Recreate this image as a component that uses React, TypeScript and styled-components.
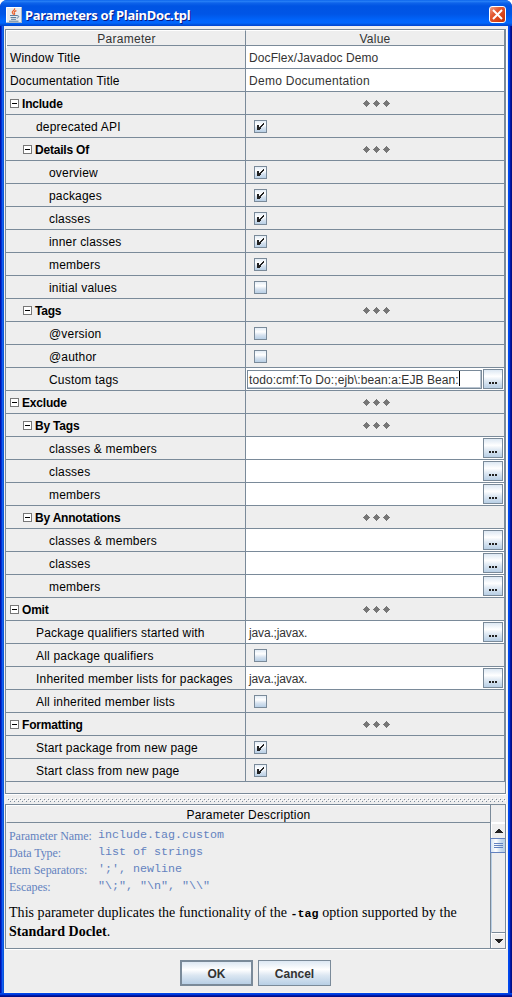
import React from 'react';
import styled, { createGlobalStyle, css } from 'styled-components';

const LINE = '#7a8a99';
const FACE = '#eeeeee';

const GlobalStyle = createGlobalStyle`
  * { box-sizing: border-box; }
  body { margin: 0; background: #fff; }
  svg { display: block; }
`;

const Window = styled.div`
  width: 512px;
  height: 997px;
  padding: 0 4px 4px;
  display: flex;
  flex-direction: column;
  border-radius: 7px 7px 0 0;
  background:
    linear-gradient(180deg, #0046e8 0 1px, #003ada 1px 2px, #0018a8 2px 3px, #000f86 3px) bottom / 100% 4px no-repeat,
    linear-gradient(90deg, #0014a8 0 1px, #0030d8 1px 2px, #1260ee 2px 3px, #0855dd 3px 4px, #0046e8 4px 508px, #0048f0 508px 509px, #0040e0 509px 510px, #0018a8 510px 511px, #000f86 511px);
  font-family: 'Liberation Sans', Arial, sans-serif;
  font-size: 12px;
  color: #000;
  overflow: hidden;
`;

const TitleBar = styled.header`
  height: 26px;
  flex: none;
  margin: 0 -4px;
  padding: 3px 6px 0 6px;
  display: flex;
  align-items: center;
  background: linear-gradient(180deg, #0058e6 0, #2b84f8 1px, #0e63ea 3px, #0054e3 6px, #0055e6 14px, #0064fb 20px, #0066ff 23px, #005be6 24px, #0042cf 26px);
`;

const Title = styled.h1`
  flex: 1;
  margin: 0 0 0 3px;
  font: bold 13px/20px 'Noto Sans', sans-serif;
  letter-spacing: -0.3px;
  white-space: pre;
  color: #fff;
  text-shadow: 1px 1px 0 #0a1883;
`;

const CloseButton = styled.button`
  width: 17px;
  height: 17px;
  padding: 0;
  display: grid;
  place-items: center;
  border: 1px solid #fff;
  border-radius: 3px;
  background: linear-gradient(135deg, #f0a08a, #e35a32 35%, #d63f12 75%, #b93008);
`;

const Client = styled.main`
  flex: 1;
  min-height: 0;
  padding: 3px 2px 0 1px;
  display: flex;
  flex-direction: column;
  background: ${FACE};
  border-bottom: 1px solid #f8f4e8;
`;

const TablePane = styled.section`
  height: 765px;
  flex: none;
  border: 1px solid ${LINE};
  box-shadow: 0 1px 0 #fff, 1px 0 0 #fff;
`;

const Table = styled.div`
  border-right: 1px solid ${LINE};
`;

const HeaderRow = styled.div`
  display: grid;
  grid-template-columns: 240px 1fr;
  height: 16px;
  border-bottom: 1px solid ${LINE};
`;

const HeaderCell = styled.div`
  border-top: 1px solid #fff;
  border-left: 1px solid #fff;
  text-align: center;
  line-height: 17px;
  color: #333;
  letter-spacing: 0.25px;
  & + & { border-left-color: ${LINE}; margin-left: -1px; }
`;

const Row = styled.div`
  display: grid;
  grid-template-columns: 240px 1fr;
  height: 23px;
  border-bottom: 1px solid ${LINE};
`;

const NameCell = styled.div<{ $indent: number; $bold?: boolean }>`
  display: flex;
  align-items: center;
  padding-left: ${p => p.$indent}px;
  border-right: 1px solid ${LINE};
  white-space: pre;
  line-height: 22px;
  letter-spacing: ${p => (p.$bold ? '-0.2px' : '0.19px')};
  font-weight: ${p => (p.$bold ? 'bold' : 'normal')};
`;

const NameText = styled.span`
  padding-top: 2px;
  line-height: 20px;
`;

const ValueCell = styled.div<{ $kind: string }>`
  display: flex;
  align-items: center;
  color: #333;
  white-space: pre;
  background: ${p => (p.$kind === 'text' || p.$kind === 'list' || p.$kind === 'edit' ? '#fff' : FACE)};
  ${p => p.$kind === 'group' && css`justify-content: center; padding-left: 3px;`}
  ${p => p.$kind === 'check' && css`padding-left: 8px;`}
  ${p => (p.$kind === 'text' || p.$kind === 'list') && css`padding-left: 3px;`}
  ${p => p.$kind === 'edit' && css`padding-left: 1px;`}
`;

const ValueText = styled.span<{ $spacing?: number }>`
  flex: 1;
  padding-top: 2px;
  line-height: 20px;
  letter-spacing: ${p => p.$spacing ?? 0.3}px;
`;

const Toggle = styled.span`
  width: 9px;
  height: 9px;
  margin-right: 3px;
  border: 1px solid #777;
  background: linear-gradient(#000, #000) center / 5px 1px no-repeat #fff;
`;

const Check = styled.span`
  width: 13px;
  height: 13px;
  display: grid;
  place-items: center;
  border: 1px solid ${LINE};
  background: linear-gradient(180deg, #e4edf6 0, #fff 35%, #d6e2ef 65%, #b8cfe5);
`;

const Editor = styled.div`
  width: 235px;
  height: 19px;
  margin-right: 1px;
  display: flex;
  align-items: center;
  border: 1px solid ${LINE};
  box-shadow: inset -1px -1px 0 #b8c4d0;
  padding: 1px 0 0 1px;
  letter-spacing: 0.08px;
`;

const Caret = styled.span`
  width: 1px;
  height: 15px;
  margin-top: -2px;
  background: #000;
`;

const MoreButton = styled.button`
  width: 20px;
  height: 20px;
  flex: none;
  margin-right: 1px;
  padding: 8px 0 0;
  display: flex;
  align-items: center;
  justify-content: center;
  gap: 1px;
  border: 1px solid ${LINE};
  background: linear-gradient(180deg, #dde8f3 0, #fff 35%, #dfe9f3 60%, #b8cfe5);
`;

const MoreDot = styled.i`
  width: 2px;
  height: 2px;
  background: #222;
`;

const Divider = styled.div`
  height: 10px;
  flex: none;
  padding: 4px 0 0 2px;
`;

const DescPane = styled.section`
  height: 145px;
  flex: none;
  display: flex;
  border: 1px solid ${LINE};
  box-shadow: 0 1px 0 #fff, 1px 0 0 #fff;
`;

const DescMain = styled.div`
  flex: 1;
`;

const DescTitle = styled.div`
  height: 18px;
  border-top: 1px solid #fff;
  border-left: 1px solid #fff;
  border-bottom: 1px solid ${LINE};
  text-align: center;
  line-height: 19px;
  letter-spacing: 0.22px;
`;

const Facts = styled.dl`
  margin: 4px 0 0 3px;
  display: grid;
  grid-template-columns: 89px 1fr;
  grid-auto-rows: 17px;
  color: #6382bf;
  font: 12px/17px 'Liberation Serif', serif;
  white-space: pre;
`;

const FactName = styled.dt`
  line-height: 19px;
  letter-spacing: -0.05px;
`;

const FactValue = styled.dd`
  margin: 0;
  font: 11.67px/17px 'Liberation Mono', monospace;
`;

const Paragraph = styled.p`
  margin: 8px 0 0 3px;
  font: 14px/19px 'Liberation Serif', serif;
  white-space: pre;
`;

const Phrase = styled.span<{ $spacing: number }>`
  letter-spacing: ${p => p.$spacing}px;
`;

const Option = styled.b`
  font: bold 11.67px 'Liberation Mono', monospace;
`;

const ScrollBar = styled.div`
  width: 15px;
  display: flex;
  flex-direction: column;
  border-left: 1px solid ${LINE};
`;

const ScrollCorner = styled.div`
  height: 17px;
  flex: none;
`;

const ScrollArrow = styled.div<{ $down?: boolean }>`
  height: 16px;
  flex: none;
  display: grid;
  place-items: center;
  border-left: 1px solid #fff;
  border-top: 1px solid ${p => (p.$down ? LINE : '#fff')};
  box-shadow: inset 0 1px 0 #fff;
`;

const ScrollThumb = styled.div`
  height: 15px;
  flex: none;
  margin-left: -1px;
  padding: 4px 0 0 3px;
  border: 1px solid #6382bf;
  border-right: 0;
  background: linear-gradient(90deg, #d6e4f2, #fff 35%, #c4d8ec 75%, #b8cfe5);
`;

const ScrollTrack = styled.div`
  flex: 1;
  border-left: 1px solid #b8cfe5;
`;

const Actions = styled.footer`
  display: flex;
  justify-content: center;
  gap: 5px;
  padding-top: 11px;
`;

const ActionButton = styled.button<{ $primary?: boolean }>`
  width: 73px;
  height: 26px;
  padding: 2px 0 0;
  border: ${p => (p.$primary ? 2 : 1)}px solid ${LINE};
  border-radius: 0;
  background: linear-gradient(180deg, #dde8f3 0, #fff 35%, #dce7f2 60%, #b8cfe5);
  color: #333;
  font: bold 12px/20px 'Liberation Sans', sans-serif;
`;

const JavaIcon = () => (
  <svg width="16" height="16" viewBox="0 0 16 16">
    <rect width="16" height="16" rx="1" fill="#e9ebed" />
    <path d="M.5 15V.5H15" fill="none" stroke="#fff" />
    <path d="M15.5 1v14.5H1" fill="none" stroke="#a9b5c4" />
    <path d="M8.6 1.2c1 2-2.9 2.500-2.300 4.500.2.8 1 1.200 1.200 1.900M10.400 3.600c-1.800.7-2.600 1.500-2 2.400.5.700.3 1.200-.3 1.700" fill="none" stroke="#e8602c" strokeWidth="1.200" />
    <path d="M4 8.500h7M4.600 10.500h5.600M5 12.300h5M3 14.200h9.500M11 8.700c2.500-.5 2.200 2-.2 2.500" fill="none" stroke="#5b7f9f" strokeWidth="1" />
  </svg>
);

const CheckMark = () => (
  <svg width="9" height="9" viewBox="0 0 9 9" shapeRendering="crispEdges">
    <path d="M1 3h2v5H1zM3 5h1v3H3zM4 4h1v3H4zM5 3h1v2H5zM6 2h1v2H6zM7 1h1v2H7z" fill="#222" />
  </svg>
);

const Diamonds = () => (
  <svg width="27" height="7" viewBox="0 0 27 7" shapeRendering="crispEdges">
    {[0, 10, 20].map(x => (
      <path key={x} transform={`translate(${x} 0)`} d="M3 0h1v1h1v1h1v1h1v1H6v1H5v1H4v1H3V6H2V5H1V4H0V3h1V2h1V1h1z" fill="#777" />
    ))}
  </svg>
);

const Bumps = () => (
  <svg width="499" height="4" viewBox="0 0 499 4" shapeRendering="crispEdges">
    <defs>
      <pattern id="bumps" width="4" height="4" patternUnits="userSpaceOnUse">
        <path d="M0 0h1v1H0zM2 2h1v1H2z" fill="#fff" />
        <path d="M1 1h1v1H1zM3 3h1v1H3z" fill={LINE} />
      </pattern>
    </defs>
    <rect width="499" height="4" fill="url(#bumps)" />
  </svg>
);

const Arrow = ({ down }: { down?: boolean }) => (
  <svg width="8" height="4" viewBox="0 0 8 4" shapeRendering="crispEdges">
    <path d={down ? 'M0 0h8v1H7v1H6v1H5v1H3V3H2V2H1V1H0z' : 'M3 0h2v1h1v1h1v1h1v1H0V3h1V2h1V1h1z'} fill="#222" />
  </svg>
);

type Item = {
  name: string;
  level: number;
  kind: 'text' | 'list' | 'edit' | 'group' | 'check';
  value?: string;
  spacing?: number;
  on?: boolean;
};

const items: Item[] = [
  { name: 'Window Title', level: 0, kind: 'text', value: 'DocFlex/Javadoc Demo', spacing: 0.1 },
  { name: 'Documentation Title', level: 0, kind: 'text', value: 'Demo Documentation', spacing: 0.27 },
  { name: 'Include', level: 0, kind: 'group' },
  { name: 'deprecated API', level: 1, kind: 'check', on: true },
  { name: 'Details Of', level: 1, kind: 'group' },
  { name: 'overview', level: 2, kind: 'check', on: true },
  { name: 'packages', level: 2, kind: 'check', on: true },
  { name: 'classes', level: 2, kind: 'check', on: true },
  { name: 'inner classes', level: 2, kind: 'check', on: true },
  { name: 'members', level: 2, kind: 'check', on: true },
  { name: 'initial values', level: 2, kind: 'check' },
  { name: 'Tags', level: 1, kind: 'group' },
  { name: '@version', level: 2, kind: 'check' },
  { name: '@author', level: 2, kind: 'check' },
  { name: 'Custom tags', level: 2, kind: 'edit', value: 'todo:cmf:To Do:;ejb\\:bean:a:EJB Bean:' },
  { name: 'Exclude', level: 0, kind: 'group' },
  { name: 'By Tags', level: 1, kind: 'group' },
  { name: 'classes & members', level: 2, kind: 'list' },
  { name: 'classes', level: 2, kind: 'list' },
  { name: 'members', level: 2, kind: 'list' },
  { name: 'By Annotations', level: 1, kind: 'group' },
  { name: 'classes & members', level: 2, kind: 'list' },
  { name: 'classes', level: 2, kind: 'list' },
  { name: 'members', level: 2, kind: 'list' },
  { name: 'Omit', level: 0, kind: 'group' },
  { name: 'Package qualifiers started with', level: 1, kind: 'list', value: 'java.;javax.', spacing: -0.15 },
  { name: 'All package qualifiers', level: 1, kind: 'check' },
  { name: 'Inherited member lists for packages', level: 1, kind: 'list', value: 'java.;javax.', spacing: -0.15 },
  { name: 'All inherited member lists', level: 1, kind: 'check' },
  { name: 'Formatting', level: 0, kind: 'group' },
  { name: 'Start package from new page', level: 1, kind: 'check', on: true },
  { name: 'Start class from new page', level: 1, kind: 'check', on: true },
];

const indentOf = ({ kind, level }: Item) =>
  kind === 'group' ? 4 + level * 13 : level === 0 ? 4 : 17 + level * 13;

const More = () => (
  <MoreButton aria-label="Edit">
    <MoreDot /><MoreDot /><MoreDot />
  </MoreButton>
);

const Value = ({ item }: { item: Item }) => (
  <ValueCell $kind={item.kind}>
    {item.kind === 'group' && <Diamonds />}
    {item.kind === 'check' && <Check>{item.on && <CheckMark />}</Check>}
    {(item.kind === 'text' || item.kind === 'list') && <ValueText $spacing={item.spacing}>{item.value}</ValueText>}
    {item.kind === 'edit' && <Editor>{item.value}<Caret /></Editor>}
    {(item.kind === 'list' || item.kind === 'edit') && <More />}
  </ValueCell>
);

const facts = [
  { name: 'Parameter Name:', value: 'include.tag.custom' },
  { name: 'Data Type:', value: 'list of strings' },
  { name: 'Item Separators:', value: "';', newline" },
  { name: 'Escapes:', value: '"\\;", "\\n", "\\\\"' },
];

export default function App() {
  return (
    <>
      <GlobalStyle />
      <Window>
        <TitleBar>
          <JavaIcon />
          <Title>Parameters of PlainDoc.tpl</Title>
          <CloseButton aria-label="Close">
            <svg width="11" height="11" viewBox="0 0 11 11">
              <path d="M1 1l9 9M10 1l-9 9" stroke="#fff" strokeWidth="2" />
            </svg>
          </CloseButton>
        </TitleBar>
        <Client>
          <TablePane>
            <Table>
              <HeaderRow>
                <HeaderCell>Parameter</HeaderCell>
                <HeaderCell>Value</HeaderCell>
              </HeaderRow>
              {items.map((item, i) => (
                <Row key={i}>
                  <NameCell $indent={indentOf(item)} $bold={item.kind === 'group'}>
                    {item.kind === 'group' && <Toggle />}
                    <NameText>{item.name}</NameText>
                  </NameCell>
                  <Value item={item} />
                </Row>
              ))}
            </Table>
          </TablePane>
          <Divider><Bumps /></Divider>
          <DescPane>
            <DescMain>
              <DescTitle>Parameter Description</DescTitle>
              <Facts>
                {facts.map(f => (
                  <React.Fragment key={f.name}>
                    <FactName>{f.name}</FactName>
                    <FactValue>{f.value}</FactValue>
                  </React.Fragment>
                ))}
              </Facts>
              <Paragraph>
                <Phrase $spacing={0.04}>This parameter duplicates the functionality of the </Phrase>
                <Option>-tag</Option>
                <Phrase $spacing={0.09}> option supported by the</Phrase>
                {'\n'}
                <b>Standard Doclet</b>.
              </Paragraph>
            </DescMain>
            <ScrollBar>
              <ScrollCorner />
              <ScrollArrow><Arrow /></ScrollArrow>
              <ScrollThumb>
                <svg width="9" height="5" viewBox="0 0 9 5" shapeRendering="crispEdges">
                  <path d="M0 0h9v1H0zM0 2h9v1H0zM0 4h9v1H0z" fill="#6382bf" />
                </svg>
              </ScrollThumb>
              <ScrollTrack />
              <ScrollArrow $down><Arrow down /></ScrollArrow>
            </ScrollBar>
          </DescPane>
          <Actions>
            <ActionButton $primary>OK</ActionButton>
            <ActionButton>Cancel</ActionButton>
          </Actions>
        </Client>
      </Window>
    </>
  );
}
